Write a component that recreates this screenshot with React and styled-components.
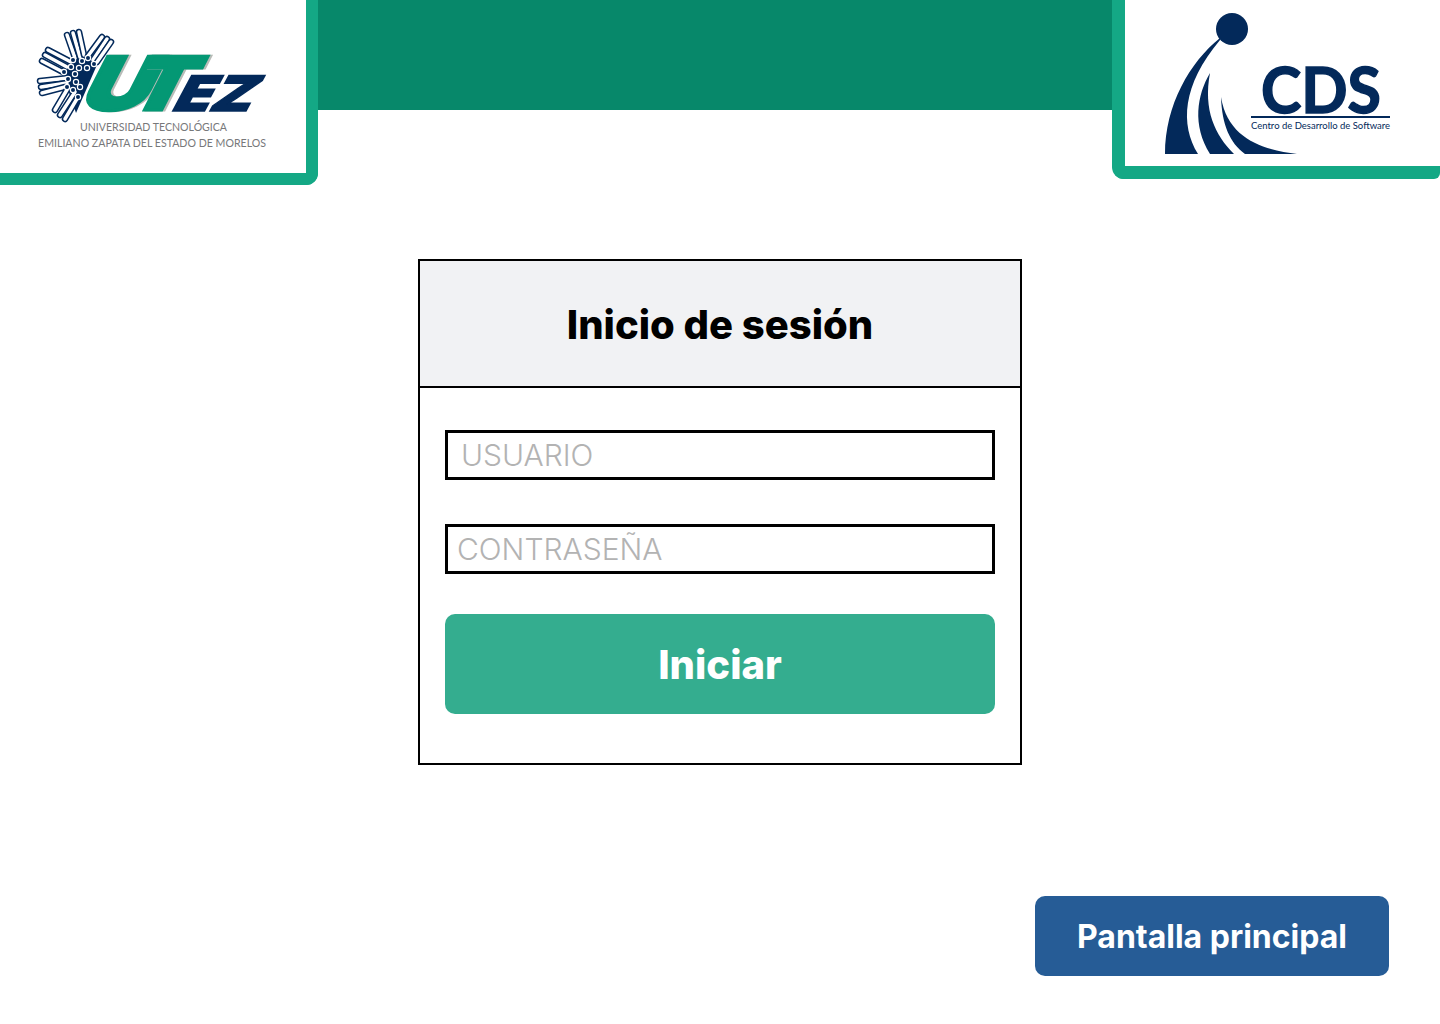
import React from "react";
import styled, { createGlobalStyle } from "styled-components";

const GlobalStyle = createGlobalStyle`
  body {
    margin: 0;
    background: #fff;
    font-family: Inter, "Liberation Sans", sans-serif;
  }
`;

const navy = "#03295a";
const green = "#049874";
const shadow = "#b9bcb8";

const fingerGroups = [
  [[67, 35, 75, 58], [73, 33, 80, 57], [79, 32, 84, 55]],
  [[102, 37, 88, 56], [107, 39, 93, 60], [111, 42, 97, 62]],
  [[48, 50, 71, 62], [45, 55, 67, 67], [42, 61, 63, 72]],
  [[40, 81, 68, 78], [41, 87, 67, 83], [42, 93, 65, 87]],
  [[55, 110, 68, 88], [60, 115, 75, 92], [65, 119, 78, 97]]
];

const nodes = [
  [73, 60], [82, 61], [88, 58], [94, 64], [87, 68], [79, 68], [71, 67], [64, 72],
  [75, 74], [68, 79], [76, 82], [80, 87], [67, 87], [73, 90], [78, 97]
];

const GreenLetter = ({ x, length, children }) => (
  <>
    <text
      transform={`translate(${x + 2.5} 109.5) skewX(-27)`}
      fill={shadow}
      stroke={shadow}
      strokeWidth="3"
      textLength={length}
      lengthAdjust="spacingAndGlyphs"
    >
      {children}
    </text>
    <text
      transform={`translate(${x} 109.5) skewX(-27)`}
      fill={green}
      stroke={green}
      strokeWidth="3"
      textLength={length}
      lengthAdjust="spacingAndGlyphs"
    >
      {children}
    </text>
  </>
);

const UtezLogo = () => (
  <svg width="306" height="173" viewBox="0 0 306 173">
    <polygon points="100,58 76,113 62,72 78,55" fill={navy} />
    {fingerGroups.flat().map(([x1, y1, x2, y2], i) => (
      <g key={i} strokeLinecap="round">
        <line x1={x1} y1={y1} x2={x2} y2={y2} stroke={navy} strokeWidth="6.5" />
        <line x1={x1} y1={y1} x2={x2} y2={y2} stroke="#fff" strokeWidth="3.5" />
      </g>
    ))}
    {nodes.map(([cx, cy], i) => (
      <circle key={i} cx={cx} cy={cy} r="2.6" fill={navy} stroke="#fff" strokeWidth="1.2" />
    ))}
    <g fontFamily="Inter, sans-serif" fontWeight="900" fontSize="74">
      <GreenLetter x={76} length={68}>U</GreenLetter>
      <GreenLetter x={123} length={60}>T</GreenLetter>
    </g>
    <text
      transform="translate(170 111) skewX(-28)"
      fill={navy}
      stroke={navy}
      strokeWidth="1.5"
      fontFamily="Inter, sans-serif"
      fontWeight="900"
      fontSize="49"
      textLength="79"
      lengthAdjust="spacingAndGlyphs"
    >
      EZ
    </text>
    <g fill="#77787a" fontFamily="Lato, sans-serif" fontSize="12">
      <text x="80" y="131" textLength="147" lengthAdjust="spacingAndGlyphs">UNIVERSIDAD TECNOLÓGICA</text>
      <text x="38" y="147" textLength="228" lengthAdjust="spacingAndGlyphs">EMILIANO ZAPATA DEL ESTADO DE MORELOS</text>
    </g>
  </svg>
);

const CdsLogo = () => (
  <svg width="315" height="166" viewBox="1125 0 315 166">
    <g fill={navy}>
      <circle cx="1232" cy="29" r="16" />
      <path d="M1220 38 C1190 62 1165 105 1165 154 L1198 154 C1180 125 1182 85 1220 40 Z" />
      <path d="M1210 73 C1197 95 1192 125 1210 154 L1234 154 C1215 135 1203 110 1210 73 Z" />
      <path d="M1221 97 C1222 125 1230 143 1245 154 L1297 154 C1265 150 1228 140 1221 97 Z" />
      <rect x="1251" y="116" width="139" height="2" />
      <text
        x="1261"
        y="112.5"
        stroke={navy}
        strokeWidth="1.5"
        fontFamily="Lato, sans-serif"
        fontWeight="700"
        fontSize="63"
        textLength="120"
        lengthAdjust="spacingAndGlyphs"
      >
        CDS
      </text>
      <text
        x="1251"
        y="129"
        fontFamily="Lato, sans-serif"
        fontSize="10"
        textLength="139"
        lengthAdjust="spacingAndGlyphs"
      >
        Centro de Desarrollo de Software
      </text>
    </g>
  </svg>
);

const App = () => (
  <Page>
    <GlobalStyle />
    <Header>
      <LeftLogo>
        <UtezLogo />
      </LeftLogo>
      <Band />
      <RightLogo>
        <CdsLogo />
      </RightLogo>
    </Header>
    <Main>
      <Card>
        <CardHeader>
          <Title>Inicio de sesión</Title>
        </CardHeader>
        <Form>
          <Field $pad={13} placeholder="USUARIO" />
          <Field $pad={9} type="password" placeholder="CONTRASEÑA" />
          <Submit type="button">Iniciar</Submit>
        </Form>
      </Card>
    </Main>
    <Footer>
      <HomeButton type="button">Pantalla principal</HomeButton>
    </Footer>
  </Page>
);

export default App;

const Page = styled.div`
  width: 1440px;
  height: 1024px;
  overflow: hidden;
  display: flex;
  flex-direction: column;
  background: #fff;
`;

const Header = styled.header`
  display: flex;
  align-items: flex-start;
  height: 185px;
`;

const LeftLogo = styled.div`
  width: 318px;
  height: 185px;
  box-sizing: border-box;
  flex-shrink: 0;
  border-right: 12px solid #14a885;
  border-bottom: 12px solid #14a885;
  border-bottom-right-radius: 12px;
  display: flex;
`;

const Band = styled.div`
  flex: 1;
  height: 110px;
  background: #07886a;
`;

const RightLogo = styled.div`
  width: 328px;
  height: 179px;
  box-sizing: border-box;
  flex-shrink: 0;
  border-left: 13px solid #14a885;
  border-bottom: 13px solid #14a885;
  border-bottom-left-radius: 12px;
  border-bottom-right-radius: 6px;
  display: flex;
`;

const Main = styled.main`
  display: flex;
  justify-content: center;
  padding-top: 74px;
`;

const Card = styled.section`
  width: 604px;
  height: 506px;
  box-sizing: border-box;
  border: 2px solid #000;
  display: flex;
  flex-direction: column;
`;

const CardHeader = styled.div`
  height: 127px;
  box-sizing: border-box;
  flex-shrink: 0;
  padding-top: 2px;
  background: #f1f2f4;
  border-bottom: 2px solid #000;
  display: flex;
  align-items: center;
  justify-content: center;
`;

const Title = styled.h1`
  margin: 0;
  font-size: 40px;
  font-weight: 800;
  color: #000;
`;

const Form = styled.form`
  display: flex;
  flex-direction: column;
  padding: 42px 25px 0;
`;

const Field = styled.input`
  width: 550px;
  height: 50px;
  box-sizing: border-box;
  margin-bottom: 44px;
  padding: 0 ${(props) => props.$pad}px;
  border: 3px solid #000;
  border-radius: 0;
  outline: none;
  background: #fff;
  font-family: Inter, sans-serif;
  font-size: 30px;
  font-weight: 300;

  &::placeholder {
    color: #b3b3b3;
    opacity: 1;
  }

  &[type="password"] {
    margin-bottom: 40px;
  }
`;

const Submit = styled.button`
  width: 550px;
  height: 100px;
  border: none;
  border-radius: 10px;
  background: #34ad8f;
  color: #fff;
  font-family: Inter, sans-serif;
  font-size: 40px;
  font-weight: 800;
`;

const Footer = styled.footer`
  display: flex;
  justify-content: flex-end;
  padding: 131px 51px 0 0;
`;

const HomeButton = styled.button`
  width: 354px;
  height: 80px;
  border: none;
  border-radius: 10px;
  background: #265c96;
  color: #fff;
  font-family: Inter, sans-serif;
  font-size: 32px;
  font-weight: 700;
`;
